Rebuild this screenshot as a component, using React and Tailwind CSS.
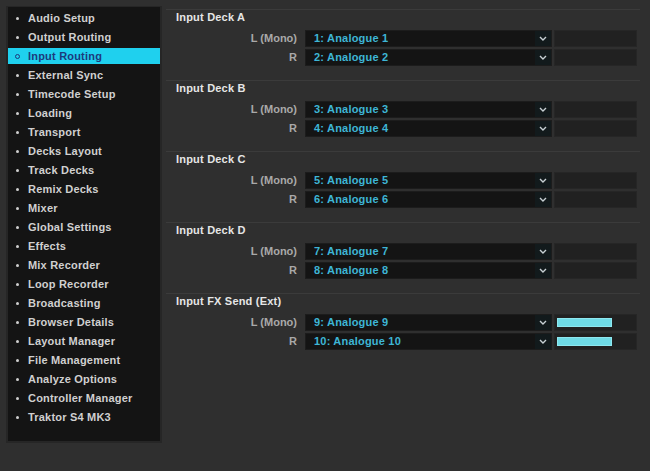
const menu = [
  "Audio Setup",
  "Output Routing",
  "Input Routing",
  "External Sync",
  "Timecode Setup",
  "Loading",
  "Transport",
  "Decks Layout",
  "Track Decks",
  "Remix Decks",
  "Mixer",
  "Global Settings",
  "Effects",
  "Mix Recorder",
  "Loop Recorder",
  "Broadcasting",
  "Browser Details",
  "Layout Manager",
  "File Management",
  "Analyze Options",
  "Controller Manager",
  "Traktor S4 MK3",
]

const sections = [
  { title: "Input Deck A", l: "1: Analogue 1", r: "2: Analogue 2" },
  { title: "Input Deck B", l: "3: Analogue 3", r: "4: Analogue 4" },
  { title: "Input Deck C", l: "5: Analogue 5", r: "6: Analogue 6" },
  { title: "Input Deck D", l: "7: Analogue 7", r: "8: Analogue 8" },
  { title: "Input FX Send (Ext)", l: "9: Analogue 9", r: "10: Analogue 10", meter: true },
]

function Chevron() {
  return (
    <svg width="8" height="5" viewBox="0 0 8 5" className="shrink-0">
      <path d="M1 1 L4 4 L7 1" fill="none" stroke="#c8d0d4" strokeWidth="1.4" />
    </svg>
  )
}

function Row({ label, value, meter }) {
  return (
    <div className="flex h-[17px] items-center">
      <div className="w-[132px] pr-[1px] text-right text-[11px] font-bold text-[#a9a9a9]">{label}</div>
      <div className="ml-[7px] flex h-full w-[247px] items-center justify-between border border-[#1c1c1c] bg-[#141414] pl-[8px]">
        <span className="text-[11px] font-bold tracking-[0.2px] text-[#3eb6d6]">{value}</span>
        <div className="flex h-full w-[16px] items-center justify-center bg-[#121a1c]">
          <Chevron />
        </div>
      </div>
      <div className="ml-[2px] flex h-full w-[83px] items-center border border-[#262626] bg-[#212121] pl-[2px]">
        {meter && <div className="h-[9px] w-[55px] border border-[#8ee8f0] bg-[#6fdbe6]" />}
      </div>
    </div>
  )
}

export default function App() {
  return (
    <div
      className="flex h-[471px] w-[650px] bg-[#2f2f2f] pl-[6px] pt-[6px]"
      style={{ fontFamily: '"Liberation Sans", Arial, sans-serif' }}
    >
      <div className="h-[437px] w-[156px] border-x-2 border-b-2 border-t border-[#262626] bg-[#141414] pt-[3px]">
        <div className="flex flex-col gap-[3px]">
          {menu.map((item) =>
            item === "Input Routing" ? (
              <div key={item} className="flex h-[16px] items-center bg-[#1fd0ee]">
                <span className="ml-[7px] h-[5px] w-[5px] rounded-full border border-[#1c3a7c]" />
                <span className="ml-[8px] text-[11px] font-bold tracking-[0.2px] text-[#1c3a7c]">{item}</span>
              </div>
            ) : (
              <div key={item} className="flex h-[16px] items-center">
                <span className="ml-[8px] h-[3px] w-[3px] rounded-full bg-[#cfcfcf]" />
                <span className="ml-[9px] text-[11px] font-bold tracking-[0.2px] text-[#d0d0d0]">{item}</span>
              </div>
            )
          )}
        </div>
      </div>

      <div className="ml-[4px] w-[474px] pt-[3px]">
        {sections.map((s) => (
          <div key={s.title} className="border-t border-[#3b3b3b] pb-[14px]">
            <div className="flex h-[15px] items-center pl-[10px] text-[11px] font-bold tracking-[0.2px] text-[#e6e6e6]">
              {s.title}
            </div>
            <div className="mt-[5px] flex flex-col gap-[2px]">
              <Row label="L (Mono)" value={s.l} meter={s.meter} />
              <Row label="R" value={s.r} meter={s.meter} />
            </div>
          </div>
        ))}
      </div>
    </div>
  )
}
